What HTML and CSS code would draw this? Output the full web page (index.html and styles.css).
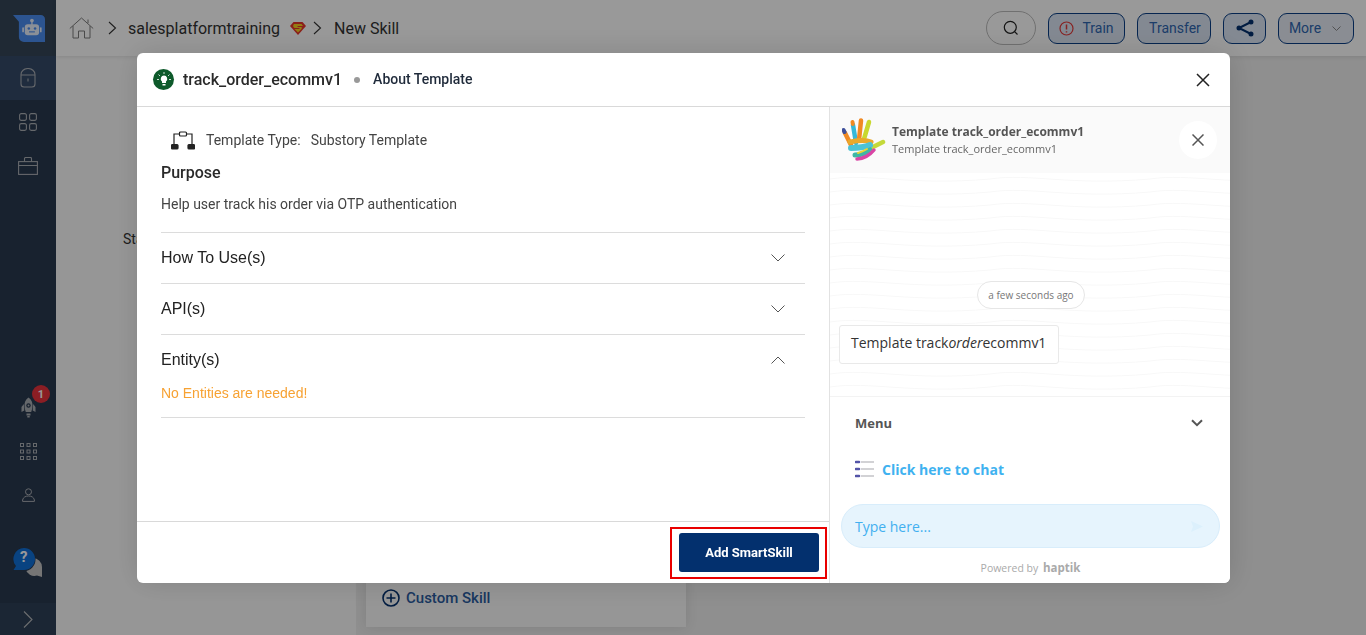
FILE: index.html
```html
<!DOCTYPE html>
<html lang="en">
  <head>
    <meta charset="UTF-8" />
    <meta name="viewport" content="width=device-width, initial-scale=1.0" />
    <title>New Skill</title>
    <link rel="stylesheet" href="styles.css">
  </head>
  <body>
    <div class="app">
      <aside class="sidebar">
        <div class="side-logo">
          <svg width="32" height="27" viewBox="0 0 38 32">
            <path d="M0 0H33a5 5 0 0 1 5 5V32H13a6 6 0 0 1-6-6V8Z" fill="#4a8df0" />
            <rect x="14" y="11" width="17" height="13" rx="3.500" fill="#e6eefc" />
            <rect x="11" y="14.500" width="2" height="6" rx="1" fill="#e6eefc" />
            <rect x="32" y="14.500" width="2" height="6" rx="1" fill="#e6eefc" />
            <circle cx="22.500" cy="6.500" r="2.200" fill="#e6eefc" />
            <rect x="21.700" y="7" width="1.600" height="5" fill="#e6eefc" />
            <circle cx="18.800" cy="16" r="1.500" fill="#4a8df0" />
            <circle cx="26.200" cy="16" r="1.500" fill="#4a8df0" />
            <path d="M19 20h7" stroke="#4a8df0" stroke-width="1.300" />
          </svg>
        </div>
        <a class="side-item side-active">
          <svg width="16" height="20" viewBox="0 0 16 20" fill="none" stroke="#a9adb3" stroke-width="1.100">
            <path d="M1 6.500a7 6 0 0 1 14 0V16a3 3 0 0 1-3 3H4a3 3 0 0 1-3-3Z" />
            <path d="M1 7h14M8 10.500v3" />
          </svg>
        </a>
        <a class="side-item">
          <svg width="18" height="18" viewBox="0 0 18 18" fill="none" stroke="#a9adb3" stroke-width="1.100">
            <rect x="0.600" y="0.600" width="6.800" height="6.800" rx="1.600" />
            <rect x="10.600" y="0.600" width="6.800" height="6.800" rx="1.600" />
            <rect x="0.600" y="10.600" width="6.800" height="6.800" rx="1.600" />
            <rect x="10.600" y="10.600" width="6.800" height="6.800" rx="1.600" />
          </svg>
        </a>
        <a class="side-item">
          <svg width="20" height="18" viewBox="0 0 20 18" fill="none" stroke="#a9adb3" stroke-width="1.100">
            <rect x="0.600" y="4.600" width="18.800" height="12.800" />
            <path d="M0.600 8.500h18.800M6.500 4.500V1.500a1 1 0 0 1 1-1h5a1 1 0 0 1 1 1v3" />
          </svg>
        </a>
        <div class="side-spacer"></div>
        <a class="side-item side-rocket">
          <svg width="15" height="21" viewBox="0 0 15 21">
            <path d="M7.500 .5c3.200 2 4 5 4 8 0 3-.8 5-1.300 6.500H4.800C4.300 13.500 3.500 11.500 3.500 8.500c0-3 .8-6 4-8Z" fill="#a9adb3" />
            <circle cx="7.500" cy="8.500" r="2.200" fill="#28394f" />
            <circle cx="7.500" cy="8.500" r="1" fill="#a9adb3" />
            <path d="M2.800 7 .5 10v5l2.800-1.500ZM12.200 7l2.300 3v5l-2.800-1.500Z" fill="#a9adb3" />
            <path d="M5.500 16.500h4v2h-4ZM6.300 19h2.400v1.500H6.300Z" fill="#a9adb3" />
          </svg>
          <span class="side-badge">1</span>
        </a>
        <a class="side-item side-small">
          <svg width="17" height="17" viewBox="0 0 17 17" fill="none" stroke="#a9adb3" stroke-width="1">
            <rect x="0.500" y="0.500" width="3" height="3" />
            <rect x="7" y="0.500" width="3" height="3" />
            <rect x="13.500" y="0.500" width="3" height="3" />
            <rect x="0.500" y="7" width="3" height="3" />
            <rect x="7" y="7" width="3" height="3" />
            <rect x="13.500" y="7" width="3" height="3" />
            <rect x="0.500" y="13.500" width="3" height="3" />
            <rect x="7" y="13.500" width="3" height="3" />
            <rect x="13.500" y="13.500" width="3" height="3" />
          </svg>
        </a>
        <a class="side-item side-small">
          <svg width="13" height="14" viewBox="0 0 13 14" fill="none" stroke="#a9adb3" stroke-width="1">
            <circle cx="6.500" cy="3.800" r="3" />
            <path d="M.6 12c.6-2.800 3-4 5.900-4s5.300 1.200 5.900 4v1.400H.6Z" />
          </svg>
        </a>
        <div class="side-help">
          <svg width="32" height="31" viewBox="0 0 32 31">
            <path d="M21 11a9 9 0 0 1 9 9v10l-5-1.500A9 9 0 1 1 21 11Z" fill="#c4c4c4" />
            <path d="M12 1a11.500 11.500 0 0 1 0 23H1l2.500-4A11.500 11.500 0 0 1 12 1Z" fill="#28394f" />
            <path d="M12 1a11 11 0 0 1 0 22H1.500l2.500-4A11 11 0 0 1 12 1Z" fill="#1070d8" />
          </svg>
          <span class="side-help-mark">?</span>
        </div>
        <a class="side-toggle">
          <svg width="10" height="17" viewBox="0 0 10 17" fill="none" stroke="#b5b8bc" stroke-width="1.100">
            <path d="M1 .5 9 8.500 1 16.500" />
          </svg>
        </a>
      </aside>

      <div class="main">
        <header class="topbar">
          <svg class="home-icon" width="25" height="22" viewBox="0 0 25 22" fill="none" stroke="#7c7c7c" stroke-width="1">
            <path d="M.8 11.500 12.500 1l11.700 10.500M4 9v12h5.500v-7h6v7H21V9M19 6V2.500" />
          </svg>
          <svg class="crumb-arrow" width="9" height="14" viewBox="0 0 9 14" fill="none" stroke="#333" stroke-width="1.100">
            <path d="M1 1l6.500 6L1 13" />
          </svg>
          <span class="crumb">salesplatformtraining</span>
          <svg class="crumb-super" width="16" height="13" viewBox="0 0 16 13">
            <path d="M3.500 0h9L16 4 8 13 0 4Z" fill="#e8342a" />
            <path d="M4 2h7.500L13 4H8c-1 0-1 1 0 1h3.500c1 1 0 2-1 3L8 10.500 4.500 7H9C10 7 10 6 9 6H4.500C2.500 5 3 3 4 2Z" fill="#f5cf20" />
          </svg>
          <svg class="crumb-arrow crumb-arrow-two" width="9" height="14" viewBox="0 0 9 14" fill="none" stroke="#333" stroke-width="1.100">
            <path d="M1 1l6.500 6L1 13" />
          </svg>
          <span class="crumb">New Skill</span>

          <div class="top-actions">
            <button class="search-pill">
              <svg width="16" height="16" viewBox="0 0 16 16" fill="none" stroke="#222" stroke-width="1.200">
                <circle cx="7.300" cy="7.300" r="6" />
                <path d="M11.600 11.600 14.500 14.500" />
              </svg>
            </button>
            <button class="top-btn btn-train">
              <svg width="15" height="15" viewBox="0 0 15 15" fill="none" stroke="#e03a3a" stroke-width="1.200">
                <circle cx="7.500" cy="7.500" r="6.500" />
                <path d="M7.500 3.500v5M7.500 10.200v1.300" stroke-width="1.500" />
              </svg>
              Train
            </button>
            <button class="top-btn btn-transfer">Transfer</button>
            <button class="top-btn btn-share">
              <svg width="18" height="18" viewBox="0 0 18 18" fill="#03306e" stroke="#03306e" stroke-width="2">
                <path d="M15 3 3 9 15 15" fill="none" />
                <circle cx="15" cy="3" r="1.500" />
                <circle cx="3" cy="9" r="1.500" />
                <circle cx="15" cy="15" r="1.500" />
              </svg>
            </button>
            <button class="top-btn btn-more">
              More
              <svg width="9" height="5" viewBox="0 0 9 5" fill="none" stroke="#888" stroke-width="1">
                <path d="M.5.500l4 4 4-4" />
              </svg>
            </button>
          </div>
        </header>
        <div class="canvas">
          <div class="canvas-left">Start</div>
          <div class="canvas-right">
            <div class="skill-card">
              <div class="skill-link">
                <svg width="18" height="18" viewBox="0 0 18 18" fill="none" stroke="#03306e" stroke-width="1.600">
                  <circle cx="9" cy="9" r="8" />
                  <path d="M9 4.500v9M4.500 9h9" />
                </svg>
                Custom Skill
              </div>
            </div>
          </div>
        </div>
      </div>
    </div>

    <div class="backdrop">
      <div class="modal">
        <div class="modal-head">
          <span class="bulb">
            <svg width="14" height="15" viewBox="0 0 14 15">
              <path d="M7 3.500a3.300 3.300 0 0 1 2 5.900V11H5V9.400a3.300 3.300 0 0 1 2-5.900ZM5.500 12h3v1.500h-3Z" fill="#fff" />
              <path d="M7 0v2M1.500 2.500 3 4M12.500 2.500 11 4M0 7.500h2M12 7.500h2" stroke="#fff" stroke-width=".8" />
            </svg>
          </span>
          <span class="modal-title">track_order_ecommv1</span>
          <span class="modal-dot"></span>
          <span class="modal-sub">About Template</span>
          <svg class="modal-close" width="14" height="14" viewBox="0 0 14 14" fill="none" stroke="#222" stroke-width="1.500">
            <path d="M1 1l12 12M13 1 1 13" />
          </svg>
        </div>

        <div class="modal-body">
          <div class="about">
            <div class="about-main">
              <div class="type-row">
                <svg width="24" height="19" viewBox="0 0 24 19" fill="none" stroke="#222" stroke-width="1.200">
                  <rect x="8.500" y="1" width="7" height="4" rx="1" />
                  <path d="M8.500 3H3v10M15.500 3H21v10" />
                  <rect x="0.500" y="13.500" width="6.500" height="4.500" rx="1" fill="#222" />
                  <rect x="17" y="13.500" width="6.500" height="4.500" rx="1" fill="#222" />
                </svg>
                <span class="type-label">Template Type:</span>
                <span>Substory Template</span>
              </div>
              <h4 class="purpose-title">Purpose</h4>
              <p class="purpose-text">Help user track his order via OTP authentication</p>

              <div class="acc-row">
                <span>How To Use(s)</span>
                <svg width="14" height="8" viewBox="0 0 14 8" fill="none" stroke="#555" stroke-width="1">
                  <path d="M.5.500l6.500 6.500L13.500.500" />
                </svg>
              </div>
              <div class="acc-row">
                <span>API(s)</span>
                <svg width="14" height="8" viewBox="0 0 14 8" fill="none" stroke="#555" stroke-width="1">
                  <path d="M.5.500l6.500 6.500L13.500.500" />
                </svg>
              </div>
              <div class="acc-row">
                <span>Entity(s)</span>
                <svg width="14" height="8" viewBox="0 0 14 8" fill="none" stroke="#555" stroke-width="1">
                  <path d="M.5 7.500 7 1l6.500 6.500" />
                </svg>
              </div>
              <div class="acc-content">No Entities are needed!</div>
            </div>
            <div class="about-foot">
              <div class="add-frame">
                <button class="add-btn">Add SmartSkill</button>
              </div>
            </div>
          </div>

          <div class="chat">
            <div class="chat-head">
              <svg class="chat-logo" width="44" height="44" viewBox="0 0 44 44" fill="none" stroke-linecap="round">
                <path d="M9 27 3 15" stroke="#f08a24" stroke-width="4.500" />
                <path d="M2.500 14 1.500 12" stroke="#3d4f9a" stroke-width="4" />
                <path d="M14 25 11 7" stroke="#35b8d8" stroke-width="4.500" />
                <path d="M10.800 6 10.500 4" stroke="#f08a24" stroke-width="4" />
                <path d="M17 22 19 2.500" stroke="#f08a24" stroke-width="4.500" />
                <path d="M22 21 27 4" stroke="#c9d82f" stroke-width="4.500" />
                <path d="M27 31 41 24" stroke="#c4d93a" stroke-width="4.500" />
                <path d="M8 24c5-1 14-3 21 0" stroke="#e9a92c" stroke-width="5" />
                <path d="M9 30c6 0 14-1 19-3" stroke="#4cc3d6" stroke-width="6" />
                <path d="M13 37c5 0 11-2 15-5" stroke="#3eb7a5" stroke-width="5" />
                <path d="M15 41c6 0 13-4 17-9" stroke="#d945a5" stroke-width="3.500" />
                <path d="M16 35c3-1 6-2 9-4" stroke="#e9d532" stroke-width="2" />
              </svg>
              <div class="chat-titles">
                <div class="chat-title">Template track_order_ecommv1</div>
                <div class="chat-subtitle">Template track_order_ecommv1</div>
              </div>
              <span class="chat-close">
                <svg width="12" height="12" viewBox="0 0 12 12" fill="none" stroke="#555" stroke-width="1.500">
                  <path d="M.5.500l11 11M11.500.500l-11 11" />
                </svg>
              </span>
            </div>

            <div class="chat-log">
              <svg class="chat-waves" width="100%" height="100%">
                <defs>
                  <pattern id="waves" width="160" height="13" patternUnits="userSpaceOnUse">
                    <path d="M0 6C40 0 80 13 160 6" fill="none" stroke="#f8f8f8" stroke-width="1" />
                  </pattern>
                </defs>
                <rect width="100%" height="100%" fill="url(#waves)" />
              </svg>
              <div class="chat-time">a few seconds ago</div>
              <div class="chat-bubble">Template track<em>order</em>ecommv1</div>
            </div>

            <div class="chat-menu">
              <div class="menu-head">
                <span>Menu</span>
                <svg width="12" height="8" viewBox="0 0 12 8" fill="none" stroke="#555" stroke-width="2">
                  <path d="M1 1.200l5 5 5-5" />
                </svg>
              </div>
              <div class="menu-link">
                <svg width="20" height="20" viewBox="0 0 20 20">
                  <path d="M6 3h13M6 10h13M6 17h13" stroke="#c4c4c8" stroke-width="1.400" />
                  <path d="M1 3h3M1 10h3M1 17h3" stroke="#5354a8" stroke-width="2.600" stroke-linecap="round" />
                </svg>
                <span>Click here to chat</span>
              </div>
              <div class="chat-input">
                <span>Type here...</span>
                <svg width="12" height="11" viewBox="0 0 12 11">
                  <path d="M0 0 12 5.500 0 11 2 5.500Z" fill="#dcf0fc" />
                </svg>
              </div>
              <div class="powered">Powered by <b>haptik</b></div>
            </div>
          </div>
        </div>
      </div>
    </div>
  </body>
</html>
```

FILE: styles.css
```css
* {
  box-sizing: border-box;
}

body {
  margin: 0;
  font-family: Roboto, sans-serif;
  color: #333;
  height: 635px;
  overflow: hidden;
}

button {
  font-family: inherit;
}

.app {
  display: flex;
  height: 635px;
}

/* sidebar */
.sidebar {
  width: 56px;
  flex-shrink: 0;
  background: #28394f;
  display: flex;
  flex-direction: column;
  align-items: center;
}

.side-logo {
  height: 56px;
  width: 100%;
  background: #344557;
  display: flex;
  justify-content: center;
  padding: 15px 0 0 1px;
}

.side-item {
  position: relative;
  height: 44px;
  width: 100%;
  display: flex;
  align-items: center;
  justify-content: center;
}

.side-active {
  background: #344a68;
}

.side-spacer {
  flex: 1;
}

.side-badge {
  position: absolute;
  top: 0;
  left: 32px;
  width: 18px;
  height: 18px;
  border-radius: 50%;
  background: #e8323c;
  color: #fff;
  font-size: 11px;
  font-weight: 700;
  display: flex;
  align-items: center;
  justify-content: center;
}

.side-help {
  position: relative;
  width: 32px;
  height: 31px;
  margin: 30px 0 25px 0;
}

.side-help-mark {
  position: absolute;
  top: 1px;
  left: 8px;
  color: #fff;
  font-size: 15px;
  font-weight: 700;
}

.side-toggle {
  width: 100%;
  height: 32px;
  background: #2e4057;
  display: flex;
  align-items: center;
  justify-content: center;
}

/* main */
.main {
  flex: 1;
  display: flex;
  flex-direction: column;
}

.topbar {
  height: 56px;
  background: #fff;
  box-shadow: 0 1px 4px rgba(0, 0, 0, 0.1);
  display: flex;
  align-items: center;
  padding: 0 12px 0 13px;
  position: relative;
}

.home-icon {
  margin-right: 14px;
}

.crumb-arrow {
  margin-right: 11px;
}

.crumb-arrow-two {
  margin-left: 7px;
  margin-right: 12px;
}

.crumb {
  font-size: 16px;
  color: #333;
}

.crumb-super {
  margin-left: 10px;
}

.top-actions {
  margin-left: auto;
  display: flex;
  align-items: center;
  gap: 12px;
}

.search-pill {
  width: 50px;
  height: 34px;
  border: 1px solid #bbb;
  border-radius: 17px;
  background: transparent;
  display: flex;
  align-items: center;
  justify-content: center;
  padding: 0;
}

.top-btn {
  height: 31px;
  border: 1px solid #0a3f86;
  border-radius: 9px;
  background: #dbe5f3;
  color: #2f66b0;
  font-size: 14px;
  display: flex;
  align-items: center;
  justify-content: center;
  padding: 0;
  gap: 8px;
}

.btn-train {
  width: 77px;
}

.btn-transfer {
  width: 74px;
  padding-left: 2px;
}

.btn-share {
  width: 43px;
}

.btn-more {
  width: 76px;
  background: #e6ecf6;
  gap: 11px;
  padding-right: 2px;
}

.canvas {
  flex: 1;
  display: flex;
}

.canvas-left {
  width: 300px;
  background: #fbfbfb;
  font-size: 14px;
  padding: 175px 0 0 67px;
}

.canvas-right {
  flex: 1;
  background: #eee;
  display: flex;
  align-items: flex-end;
  padding: 0 0 8px 10px;
}

.skill-card {
  width: 320px;
  height: 60px;
  background: #fafafa;
  box-shadow: 0 0 12px rgba(0, 0, 0, 0.1);
  padding: 22px 0 0 16px;
}

.skill-link {
  display: flex;
  align-items: center;
  gap: 6px;
  color: #2a5ca0;
  font-size: 15px;
  font-weight: 500;
}

/* modal */
.backdrop {
  position: fixed;
  inset: 0;
  background: rgba(0, 0, 0, 0.4);
  padding: 53px 136px 52px 137px;
}

.modal {
  height: 530px;
  background: #fff;
  border-radius: 6px;
  overflow: hidden;
  display: flex;
  flex-direction: column;
  box-shadow: 0 0 30px rgba(0, 0, 0, 0.14);
}

.modal-head {
  height: 54px;
  flex-shrink: 0;
  border-bottom: 1px solid #d9d9d9;
  display: flex;
  align-items: center;
  padding: 0 20px 0 16px;
}

.bulb {
  width: 21px;
  height: 21px;
  border-radius: 50%;
  background: #0e5a2b;
  display: flex;
  align-items: center;
  justify-content: center;
  margin-right: 9px;
}

.modal-title {
  font-size: 16px;
  font-weight: 500;
  color: #2a2a2a;
}

.modal-dot {
  width: 6px;
  height: 6px;
  border-radius: 50%;
  background: #999;
  margin: 0 13px 0 12px;
}

.modal-sub {
  font-size: 14px;
  font-weight: 500;
  color: #1f2a3a;
  margin-bottom: 2px;
}

.modal-close {
  margin-left: auto;
}

.modal-body {
  flex: 1;
  display: flex;
  min-height: 0;
}

.about {
  width: 693px;
  flex-shrink: 0;
  border-right: 1px solid #e2e2e2;
  display: flex;
  flex-direction: column;
}

.about-main {
  flex: 1;
  padding: 0 24px;
  font-size: 14px;
}

.type-row {
  display: flex;
  align-items: center;
  height: 22px;
  margin: 22px 0 0 10px;
  color: #444;
}

.type-label {
  margin: 0 10px 0 11px;
}

.purpose-title {
  font-size: 16px;
  font-weight: 500;
  color: #2a2a2a;
  margin: 13px 0 0;
  line-height: 18px;
}

.purpose-text {
  margin: 14px 0 20px;
  line-height: 16px;
  color: #444;
}

.acc-row {
  height: 51px;
  border-top: 1px solid #dcdcdc;
  font-family: "Liberation Sans", sans-serif;
  font-size: 16px;
  color: #222;
  display: flex;
  align-items: center;
  justify-content: space-between;
  padding-right: 20px;
}

.acc-content {
  height: 33px;
  border-bottom: 1px solid #dcdcdc;
  font-family: "Liberation Sans", sans-serif;
  color: #f7a233;
  line-height: 16px;
}

.about-foot {
  height: 62px;
  flex-shrink: 0;
  border-top: 1px solid #d9d9d9;
  display: flex;
  justify-content: flex-end;
  padding: 5px 2px 0 0;
}

.add-frame {
  width: 157px;
  height: 52px;
  border: 2px solid #e90000;
  padding: 4px 7px;
}

.add-btn {
  width: 140px;
  height: 39px;
  border: 0;
  border-radius: 3px;
  background: #03306e;
  color: #fff;
  font-size: 13px;
  font-weight: 700;
}

/* chat panel */
.chat {
  flex: 1;
  display: flex;
  flex-direction: column;
  font-family: "Open Sans", sans-serif;
}

.chat-head {
  height: 66px;
  flex-shrink: 0;
  background: #fafafa;
  display: flex;
  align-items: center;
  padding: 0 13px 0 12px;
}

.chat-logo {
  margin-right: 6px;
}

.chat-title {
  font-size: 12px;
  font-weight: 700;
  color: #555;
  line-height: 16px;
  margin-top: 2px;
}

.chat-subtitle {
  font-size: 11px;
  color: #666;
  line-height: 18px;
}

.chat-close {
  margin-left: auto;
  width: 38px;
  height: 38px;
  border-radius: 50%;
  background: #fff;
  display: flex;
  align-items: center;
  justify-content: center;
}

.chat-log {
  position: relative;
  flex: 1;
  background: #fff;
  padding: 108px 0 0 9px;
}

.chat-waves {
  position: absolute;
  inset: 0;
}

.chat-time {
  position: relative;
  width: 108px;
  height: 28px;
  margin: 0 0 16px 138px;
  border: 1px solid #e6e6e6;
  border-radius: 14px;
  background: #fff;
  color: #777;
  font-size: 10px;
  line-height: 26px;
  text-align: center;
}

.chat-bubble {
  position: relative;
  display: inline-block;
  height: 39px;
  padding: 0 12px 0 11px;
  border: 1px solid #e9e9e9;
  border-radius: 3px;
  background: #fff;
  color: #333;
  font-size: 14px;
  line-height: 34px;
}

.chat-menu {
  height: 187px;
  flex-shrink: 0;
  background: #fff;
  border-top: 1px solid #f3f3f3;
  display: flex;
  flex-direction: column;
  padding: 0 10px 0 11px;
}

.menu-head {
  display: flex;
  align-items: center;
  justify-content: space-between;
  height: 20px;
  margin-top: 16px;
  padding: 0 17px 0 14px;
  font-size: 13px;
  font-weight: 700;
  color: #555;
}

.menu-link {
  display: flex;
  align-items: center;
  gap: 7px;
  margin: 26px 0 0 14px;
  color: #3fb2f0;
  font-size: 14px;
  font-weight: 700;
  height: 20px;
}

.chat-input {
  height: 44px;
  margin-top: 25px;
  border: 1px solid #d8edfb;
  border-radius: 22px;
  background: #e6f4fd;
  color: #42b0f0;
  font-size: 14px;
  display: flex;
  align-items: center;
  justify-content: space-between;
  padding: 0 16px 0 13px;
}

.powered {
  text-align: center;
  margin-top: 12px;
  font-size: 10.500px;
  color: #aaa;
}

.powered b {
  font-size: 11.500px;
  margin-left: 2px;
}
```
